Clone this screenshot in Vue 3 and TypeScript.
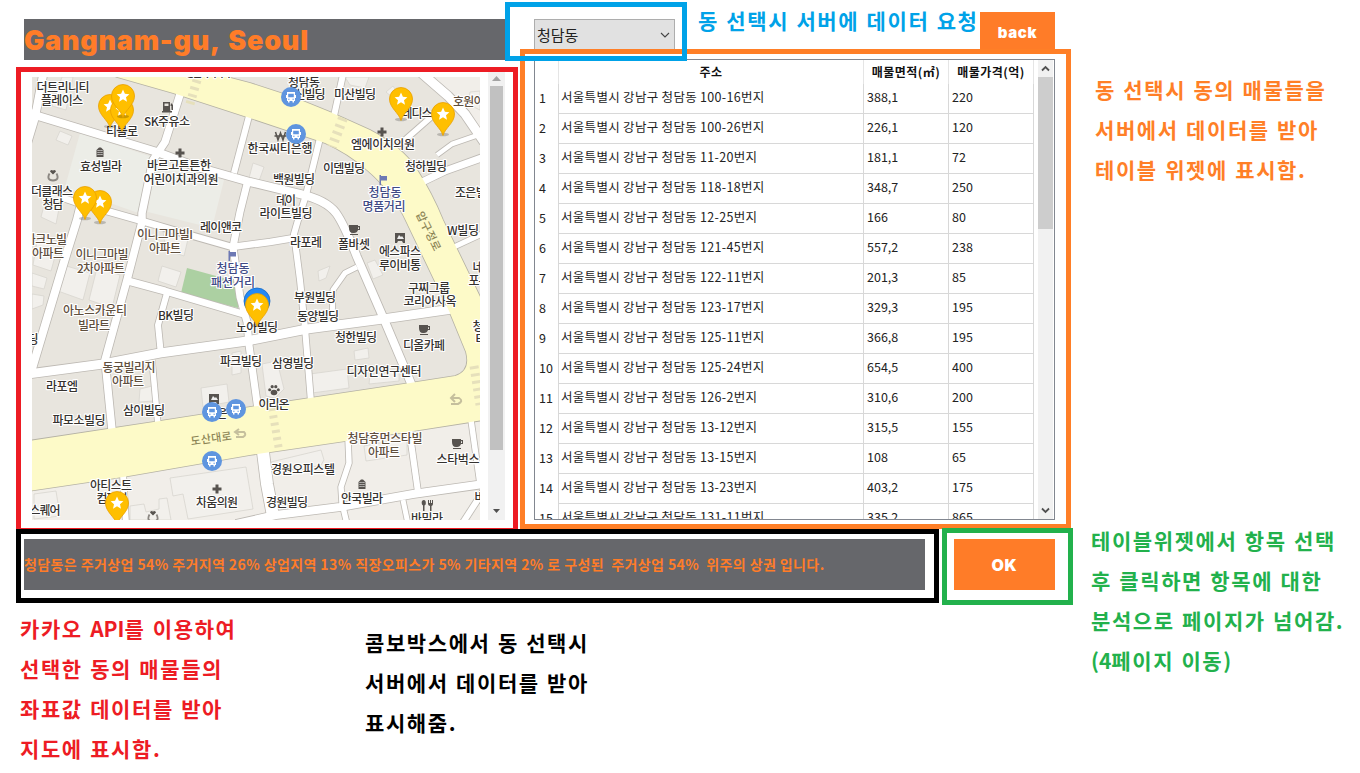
<script setup lang="ts">
interface Listing { address: string; area: string; price: string }
interface Label { t: string; x: number; y: number; w: number; k?: string; r?: number }

const dong = '청담동'
const prefix = '서울특별시 강남구 청담동 '
const raw: [string, string, string][] = [
  ['100-16', '388,1', '220'], ['100-26', '226,1', '120'], ['11-20', '181,1', '72'],
  ['118-18', '348,7', '250'], ['12-25', '166', '80'], ['121-45', '557,2', '238'],
  ['122-11', '201,3', '85'], ['123-17', '329,3', '195'], ['125-11', '366,8', '195'],
  ['125-24', '654,5', '400'], ['126-2', '310,6', '200'], ['13-12', '315,5', '155'],
  ['13-15', '108', '65'], ['13-23', '403,2', '175'], ['131-11', '335,2', '865'],
]
const listings: Listing[] = raw.map(([lot, area, price]) => ({ address: `${prefix}${lot}번지`, area, price }))

const minorRoads: { d: string; w: number }[] = [
  { d: 'M44 70L35 117L22 160', w: 8 },
  { d: 'M28 112L38 116L157 152L197 167L250 182L300 194Q326 200 336 213Q344 224 357 257L383 317L413 388', w: 8 },
  { d: 'M182 88L165 142L153 160L142 213L142 222L127 280L105 360L112 430', w: 7.5 },
  { d: 'M249 116L234 173', w: 6 },
  { d: 'M247 184L240 212L233 247L240 297L247 322L249 345L258 410', w: 7 },
  { d: 'M60 197L75 202L142 221L190 235L232 247L270 242L294 238', w: 6.5 },
  { d: 'M320 138L306 195L298 220L294 234L300 280L305 328L311 402', w: 6 },
  { d: 'M344 70L334 116', w: 6 },
  { d: 'M83 196L77 220L67 252L31 372', w: 8 },
  { d: 'M128 281L165 291L243 314', w: 7 },
  { d: 'M167 293L158 325L161 355', w: 6 },
  { d: 'M28 374L103 364L160 353L247 341L307 329L383 319L452 309', w: 9 },
  { d: 'M152 360L158 425', w: 5.5 },
  { d: 'M357 267L345 273L333 290L332 325', w: 5 },
  { d: 'M418 70L448 96L465 114L484 142', w: 9 },
  { d: 'M437 155L452 144L478 135', w: 4.5 },
  { d: 'M398 146L430 118L438 108', w: 5.5 },
  { d: 'M418 184L445 171L484 157', w: 7 },
  { d: 'M454 247L484 233', w: 5 },
  { d: 'M123 474L126 524', w: 6 },
  { d: 'M263 452L267 484L273 516', w: 12 },
  { d: 'M236 524L276 515L340 507L413 494L484 484', w: 8 },
  { d: 'M348 438L349 463L341 487L342 503L347 524', w: 5.5 },
  { d: 'M409 428L418 492', w: 6 },
  { d: 'M471 420L480 484', w: 5.5 },
  { d: 'M403 500L408 524', w: 5 },
  { d: 'M484 490L462 524', w: 6 },
]

const avenue =
  'M117 77L105 72L200 70L250 83L293 97L330 112L370 130Q402 147 416 168Q432 193 443 220L484 305V420L407 432L250 455L123 477L28 491V441L160 421L250 407L310 398L410 383L455 376Q471 371 466 352L450 313L407 223Q393 192 367 170Q348 153 325 143L250 118L173 93Z'

const buildings: string[] = [
  '60,131 72,136 68,145 56,140', '48,190 62,193 56,224 41,217',
  '253,163 264,167 259,181 249,178', '38,235 59,242 51,271 33,265', '32,273 47,278 44,289 32,286',
  '32,294 44,296 43,305 32,309', '63,265 90,273 83,300 58,291', '97,268 120,275 112,308 89,300',
  '162,266 181,272 176,287 158,281', '163,232 188,239 184,256 166,250',
  '140,389 152,386 153,401 139,402', '232,353 241,351 241,373 232,375',
  '201,388 227,384 229,402 203,407', '262,364 277,361 284,389 275,398 266,396',
  '310,374 347,369 349,388 312,393', '354,351 368,348 369,358 355,360',
  '318,271 330,266 326,278 319,281', '367,263 375,260 383,275 373,279',
  '345,77 369,77 365,88 350,85', '470,92 480,91 480,110 468,104',
  '170,478 246,467 253,509 188,519 183,494 173,496', '130,506 144,504 146,512 159,509 159,499 167,498 171,520 130,520',
  '271,462 321,450 324,460 321,465 300,470 272,468', '364,446 407,438 407,455 366,461',
  '34,494 56,491 60,516 34,519', '370,374 399,372 399,381 369,384',
  '62,77 73,77 66,110 52,106', '386,92 393,86 397,92 392,97',
]

const labels: Label[] = [
  { t: '청담사거리역', x: 208, y: 73, w: 46 },
  { t: '더트리니티', x: 63, y: 88, w: 53 }, { t: '플레이스', x: 62, y: 101, w: 42 },
  { t: 'SK주유소', x: 167, y: 122, w: 46 }, { t: '티블로', x: 122, y: 132, w: 32 },
  { t: '효성빌라', x: 101, y: 167, w: 42 }, { t: '바르고튼튼한', x: 179, y: 166, w: 64 },
  { t: '어린이치과의원', x: 181, y: 180, w: 75 }, { t: '더클래스', x: 52, y: 192, w: 42 },
  { t: '청담', x: 53, y: 205, w: 21 }, { t: '청담동', x: 304, y: 83, w: 32 },
  { t: '신빌딩', x: 310, y: 95, w: 31 }, { t: '미산빌딩', x: 355, y: 95, w: 42 },
  { t: '레디스', x: 417, y: 114, w: 31 }, { t: '호원아트', x: 474, y: 102, w: 42, k: 'apt' },
  { t: '엠에이치의원', x: 383, y: 145, w: 64 }, { t: '한국씨티은행', x: 280, y: 149, w: 65 },
  { t: '이뎀빌딩', x: 344, y: 169, w: 42 }, { t: '청하빌딩', x: 426, y: 167, w: 42 },
  { t: '백원빌딩', x: 294, y: 180, w: 42 }, { t: '데이', x: 286, y: 201, w: 20 },
  { t: '라이트빌딩', x: 286, y: 214, w: 53 }, { t: '청담동', x: 385, y: 193, w: 33, k: 'area' },
  { t: '명품거리', x: 384, y: 207, w: 43, k: 'area' }, { t: '조은빌딩', x: 476, y: 193, w: 42 },
  { t: '레이앤코', x: 221, y: 228, w: 42 }, { t: '이니그마빌I', x: 165, y: 235, w: 56, k: 'apt' },
  { t: '아파트', x: 165, y: 249, w: 32, k: 'apt' }, { t: '아크노빌', x: 46, y: 240, w: 42, k: 'apt' },
  { t: '아파트', x: 48, y: 254, w: 32, k: 'apt' }, { t: '이니그마빌', x: 102, y: 255, w: 53, k: 'apt' },
  { t: '2차아파트', x: 101, y: 269, w: 48, k: 'apt' }, { t: '라포레', x: 306, y: 243, w: 32 },
  { t: '폴바셋', x: 354, y: 245, w: 32 }, { t: '에스파스', x: 400, y: 252, w: 42 },
  { t: '루이비통', x: 400, y: 266, w: 42 }, { t: 'W빌딩', x: 463, y: 231, w: 32 },
  { t: '네일', x: 483, y: 268, w: 21 }, { t: '포유', x: 479, y: 281, w: 21 },
  { t: '청담동', x: 233, y: 269, w: 33, k: 'area' }, { t: '패션거리', x: 233, y: 283, w: 44, k: 'area' },
  { t: '구찌그룹', x: 429, y: 289, w: 42 }, { t: '코리아사옥', x: 430, y: 302, w: 53 },
  { t: '부원빌딩', x: 315, y: 298, w: 42 }, { t: '동양빌딩', x: 318, y: 317, w: 42 },
  { t: 'BK빌딩', x: 176, y: 316, w: 36 }, { t: '노아빌딩', x: 257, y: 328, w: 42 },
  { t: '청한빌딩', x: 356, y: 338, w: 42 }, { t: '디올카페', x: 424, y: 346, w: 42 },
  { t: '아노스카운티', x: 95, y: 311, w: 64, k: 'apt' }, { t: '빌라트', x: 94, y: 326, w: 32, k: 'apt' },
  { t: '딩', x: 33, y: 340, w: 10 }, { t: '청담', x: 483, y: 327, w: 21 }, { t: '타워', x: 486, y: 340, w: 21 },
  { t: '파크빌딩', x: 241, y: 362, w: 42 }, { t: '삼영빌딩', x: 293, y: 364, w: 42 },
  { t: '동궁빌리지', x: 129, y: 368, w: 53, k: 'apt' }, { t: '아파트', x: 128, y: 382, w: 32, k: 'apt' },
  { t: '라포엠', x: 62, y: 387, w: 32 }, { t: '디자인연구센터', x: 384, y: 372, w: 75 },
  { t: '이리온', x: 274, y: 405, w: 31 }, { t: '삼이빌딩', x: 144, y: 411, w: 42 },
  { t: '파모소빌딩', x: 79, y: 421, w: 53 }, { t: '은', x: 222, y: 414, w: 10 },
  { t: '청담휴먼스타빌', x: 385, y: 439, w: 75, k: 'apt' }, { t: '아파트', x: 384, y: 453, w: 32, k: 'apt' },
  { t: '스타벅스', x: 458, y: 460, w: 43 }, { t: '경원오피스텔', x: 303, y: 470, w: 64 },
  { t: '아티스트', x: 111, y: 486, w: 42 }, { t: '컴퍼니', x: 112, y: 499, w: 31 },
  { t: '차움의원', x: 217, y: 503, w: 42 }, { t: '안국빌라', x: 362, y: 499, w: 42 },
  { t: '경원빌딩', x: 287, y: 503, w: 42 }, { t: '스퀘어', x: 45, y: 511, w: 31 },
  { t: '바밀라', x: 427, y: 519, w: 32 }, { t: '바움', x: 485, y: 498, w: 21 },
  { t: '도산대로', x: 211, y: 438, w: 41, k: 'road', r: -8 },
  { t: '압구정로', x: 429, y: 231, w: 42, k: 'road', r: 64 },
]

const pins: [number, number][] = [
  [110, 106], [122, 110], [123, 96], [100, 202], [85, 198], [401, 99], [443, 114], [257, 305], [117, 503],
]
const buses: [number, number][] = [[291, 97], [296, 134], [212, 412], [236, 409], [212, 461]]
const crosses: [number, number][] = [[180, 153], [382, 132], [217, 489]]
const cups: [number, number][] = [[354, 230], [424, 330], [457, 444]]
const towers: [number, number][] = [[100, 152], [362, 484]]
const flags: [number, number][] = [[383, 180], [232, 256]]
const frames = ['red', 'orange', 'blue', 'black', 'green']
</script>

<template>
  <main class="page">
    <section class="board">
      <header class="top">
        <h1 class="title">Gangnam-gu, Seoul</h1>
        <div class="combo">
          <span>{{ dong }}</span>
          <svg width="10" height="6" viewBox="0 0 10 6"><path d="M1 1L5 5L9 1" fill="none" stroke="#444" stroke-width="1.1" /></svg>
        </div>
        <p class="note n-blue">동 선택시 서버에 데이터 요청</p>
        <button class="btn back">back</button>
      </header>

      <div class="body">
        <div class="mapview">
          <svg class="map" width="448" height="443" viewBox="32 77 448 443">
            <rect x="32" y="77" width="448" height="443" fill="#e8e5de" />
            <path d="M28 491L123 477L250 455L407 432L484 420V524H28Z" fill="#f1eee9" />
            <path d="M430 77H480V130Z" fill="#f1eee9" />
            <path d="M80 133L152 157L141 214L65 187ZM155 162L224 180L212 228L148 212Z" fill="#ecede7" />
            <path d="M187 268L238 282V308L181 293Z" fill="#acd0a2" />
            <polygon v-for="b in buildings" :key="b" :points="b" class="bld" />
            <g fill="none" stroke-linejoin="round">
              <path v-for="r in minorRoads" :key="r.d" :d="r.d" stroke="#bdb9b3" :stroke-width="r.w + 1.6" />
              <path :d="avenue" stroke="#b5b2a4" stroke-width="1.6" />
              <path v-for="r in minorRoads" :key="r.d" :d="r.d" stroke="#fff" :stroke-width="r.w" />
            </g>
            <path :d="avenue" fill="#fdfac8" />
            <g fill="none" stroke="#e6e0bb" stroke-dasharray="3 4.4">
              <path d="M197 80L190 104" stroke-width="9" />
              <path d="M343 118L332 147" stroke-width="10" />
              <path d="M272 408L279 450" stroke-width="8" />
              <path d="M474 366L480 405" stroke-width="9" />
            </g>
            <g fill="none" stroke="#c5bf9d" stroke-width="2">
              <path d="M236 437H243Q247 435 244 432H236M239 429L235 432L239 435" />
              <path d="M451 404H458Q464 401 459 398H452M455 394L451 398L455 402" />
            </g>

            <g fill="#57534f">
              <path v-for="c in crosses" :key="c.join()" :transform="`translate(${c[0]} ${c[1]})`" d="M-1.5-4.5h3v3h3v3h-3v3h-3v-3h-3v-3h3z" />
              <path v-for="c in cups" :key="c.join()" :transform="`translate(${c[0]} ${c[1]})`" fill-rule="evenodd" d="M-5-5H4V-4H6V0H4Q3 3 0 3H-1Q-5 3-5-2ZM4-2.8V-1H5V-2.8ZM-4 4H4V5H-4Z" />
              <g v-for="c in towers" :key="c.join()" :transform="`translate(${c[0]} ${c[1]})`">
                <path d="M-3.5 5V-2L-1-4.5H1L3.5-2V5Z" />
                <path d="M-2.5-1.5H2.5M-2.5.5H2.5M-2.5 2.5H2.5" stroke="#fff" stroke-width=".8" stroke-dasharray="1.2 .7" />
              </g>
              <path fill-rule="evenodd" d="M163 102H170V111H172V112.500H162V111H163ZM164.500 103.500V106H168.500V103.500ZM171 103L173 105V110H171.500V106H170.500Z" />
              <path d="M395 233h10v10h-2l-1-2h-4l-1 2h-2zM209 394h10v10h-2l-1-2h-4l-1 2h-2z" />
              <path d="M397 239l2-4 2 2 1-1 2 3zM211 400l2-4 2 2 1-1 2 3z" fill="#eee" />
              <g transform="translate(274 390)">
                <ellipse cx="0" cy="2.500" rx="3.300" ry="2.800" /><circle cx="-4.300" cy="-.3" r="1.500" /><circle cx="4.300" cy="-.3" r="1.500" />
                <circle cx="-1.800" cy="-3.300" r="1.600" /><circle cx="1.800" cy="-3.300" r="1.600" />
              </g>
              <g v-for="c in [[53, 175], [153, 516]]" :key="c.join()" :transform="`translate(${c[0]} ${c[1]})`">
                <path d="M0-.5L-3-3.500Q-2.500-6 0-4.600Q2.500-6 3-3.500Z" />
                <path d="M-3.500-1.500Q-7 5 0 5.500Q7 5 3.500-1.500" fill="none" stroke="#8b8782" stroke-width="1.800" />
              </g>
              <path d="M422 501q2-2 3.500 0q1 4-1 4.500v5.500h-1.500v-5.500q-2-1-1-4.500zM428 500h1v3h1v-3h1v3h1v-3h1v4q0 1.500-1.500 2v5h-1.500v-5q-2-.5-2-2z" />
              <path d="M275.500 132L278 140L280.500 133L283 140L285.500 132M274.500 136H286.500" fill="none" stroke="#57534f" stroke-width="1.500" />
            </g>
            <path v-for="f in flags" :key="f.join()" :transform="`translate(${f[0]} ${f[1]})`" d="M-3.500-5h1.500v1h6v4.500h-6V5h-1.500z" fill="#6d79b4" />

            <text
              v-for="(l, i) in labels" :key="i" :x="l.x" :y="l.y" :textLength="l.w" class="lb" :class="l.k" dy="4.4"
              :transform="l.r ? `rotate(${l.r} ${l.x} ${l.y})` : undefined"
            >{{ l.t }}</text>

            <g v-for="b in buses" :key="b.join()" :transform="`translate(${b[0]} ${b[1]})`">
              <circle r="10" fill="#5f95df" />
              <path fill="#fff" fill-rule="evenodd" d="M-4-5H4V-2H5V1H4V4H3V5.500H1.500V4H-1.500V5.500H-3V4H-4V1H-5V-2H-4ZM-2.800-3.200V.3H2.800V-3.200ZM-2.800 1.700V2.800H-1.500V1.700ZM1.500 1.700V2.800H2.800V1.700Z" />
            </g>

            <circle cx="257" cy="301" r="13" fill="#2389f5" stroke="#1768c4" stroke-width=".8" />
            <g v-for="p in pins" :key="p.join()" :transform="`translate(${p[0]} ${p[1]})`">
              <ellipse cy="20.500" rx="6" ry="1.800" fill="#000" opacity=".2" />
              <path d="M0 21.500C-2 14-11.500 9-11.500 0A11.500 11.500 0 0 1 11.500 0C11.500 9 2 14 0 21.500Z" fill="#ffbf00" stroke="#e8a000" stroke-width=".8" />
              <path d="M0-6.500L1.900-2.200L6.400-1.800L3 1.200L4 5.700L0 3.300L-4 5.700L-3 1.200L-6.400-1.800L-1.900-2.200Z" fill="#fff" />
            </g>
          </svg>
          <div class="vbar">
            <svg width="17" height="14"><path d="M4 9L8.500 4L13 9Z" fill="#a3a3a3" /></svg>
            <i class="thumb" />
            <svg class="down" width="17" height="17"><path d="M5 6H12L8.500 10Z" fill="#505050" /></svg>
          </div>
        </div>

        <div class="tablebox">
          <div class="grid">
            <div class="tr th"><span /><span>주소</span><span>매물면적(㎡)</span><span>매물가격(억)</span></div>
            <div v-for="(r, i) in listings" :key="i" class="tr">
              <span class="num">{{ i + 1 }}</span><span>{{ r.address }}</span><span>{{ r.area }}</span><span>{{ r.price }}</span>
            </div>
          </div>
          <div class="sbar">
            <svg width="15" height="17"><path d="M4 10.500L7.500 7L11 10.500" fill="none" stroke="#505050" stroke-width="1.800" /></svg>
            <i class="thumb" />
            <svg class="down" width="15" height="17"><path d="M4 6.500L7.500 10L11 6.500" fill="none" stroke="#505050" stroke-width="1.800" /></svg>
          </div>
        </div>
      </div>

      <footer class="foot">
        <p class="summary">청담동은 주거상업 54% 주거지역 26% 상업지역 13% 직장오피스가 5% 기타지역 2% 로 구성된&nbsp; 주거상업 54%&nbsp; 위주의 상권 입니다.</p>
        <button class="btn ok">OK</button>
      </footer>

      <div class="under">
        <p class="note n-red">카카오 <span class="tight">API</span>를 이용하여<br>선택한 동의 매물들의<br>좌표값 데이터를 받아<br>지도에 표시함.</p>
        <p class="note n-black">콤보박스에서 동 선택시<br>서버에서 데이터를 받아<br>표시해줌.</p>
      </div>
    </section>

    <aside class="side">
      <p class="note n-orange">동 선택시 동의 매물들을<br>서버에서 데이터를 받아<br>테이블 위젯에 표시함.</p>
      <p class="note n-green">테이블위젯에서 항목 선택<br>후 클릭하면 항목에 대한<br>분석으로 페이지가 넘어감.<br><span class="tight">(4</span>페이지 이동)</p>
    </aside>

    <div v-for="f in frames" :key="f" class="frame" :class="`f-${f}`" />
  </main>
</template>

<style>
html, body { background: #fff; overflow: hidden; }
</style>

<style scoped>
* { box-sizing: border-box; }
p, h1 { margin: 0; }
.page {
  position: relative; display: grid; grid-template-columns: 1071px 1fr; width: 1360px; height: 773px;
  overflow: hidden; background: #fff; font-family: "Noto Sans CJK KR", "Noto Sans", sans-serif;
}
.board { padding-top: 12px; }
.top { display: flex; align-items: flex-start; height: 47px; margin-left: 24px; }
.title {
  flex: none; width: 481px; height: 41px; margin-top: 7px; background: #66676b; color: #ff7c28;
  font: 900 27px/44px Inter, "DejaVu Sans", sans-serif; letter-spacing: .75px; word-spacing: 3px; white-space: nowrap;
}
.combo {
  flex: none; display: flex; align-items: center; justify-content: space-between; width: 141px; height: 31px;
  margin: 7px 0 0 29px; padding: 0 4px 0 2px; border: 1px solid #adadad; background: #e1e1e1;
  font-size: 15px; line-height: 28px; color: #222;
}
.note { font-size: 21px; font-weight: 700; line-height: 40px; letter-spacing: 1.6px; word-spacing: 1px; white-space: nowrap; }
.tight { letter-spacing: 0; }
.n-blue { flex: none; width: 282px; margin: -12px 0 0 23px; color: #00a2e8; }
.n-red { color: #ed1c24; width: 345px; margin-top: -2px; }
.n-black { color: #000; margin-top: 12px; }
.n-orange { color: #ff7f27; }
.n-green { color: #22b14c; }
.btn { flex: none; border: 0; padding: 0; background: #ff7c28; color: #fff; font: 900 15px/1 Inter, "DejaVu Sans", sans-serif; letter-spacing: .6px; }
.back { width: 75px; height: 41px; }
.body { display: flex; height: 461px; margin-left: 24px; }
.mapview { display: flex; justify-content: space-between; width: 481px; height: 448px; margin-top: 13px; padding-left: 8px; }
.map { display: block; margin-top: 5px; }
.bld { fill: #f2f0ec; stroke: #d8d5cf; stroke-width: .8; }
.lb {
  font-size: 12px; font-weight: 500; text-anchor: middle; fill: #35322f; stroke: #fff; stroke-width: 2.2px;
  stroke-linejoin: round; paint-order: stroke;
}
.apt { fill: #5f4f3e; }
.area { fill: #404a85; }
.road { fill: #8c8556; stroke: #fdfac8; font-size: 11px; }
.vbar, .sbar { display: flex; flex-direction: column; background: #f1f1f1; }
.vbar { width: 17px; align-items: center; }
.vbar .thumb { width: 13px; height: 364px; background: #c1c1c1; }
.down { margin-top: auto; }
.tablebox { display: flex; justify-content: space-between; width: 521px; height: 461px; margin-left: 29px; border: 1px solid #828790; overflow: hidden; }
.grid { width: 499px; }
.tr { display: grid; grid-template-columns: 24px 305px 85px 85px; height: 30px; font-size: 12.5px; line-height: 26px; color: #222; }
.tr span { border-right: 1px solid #d8d8d8; border-bottom: 1px solid #d8d8d8; padding-left: 2px; white-space: nowrap; }
.tr span + span { padding-left: 3px; }
.tr span:nth-child(2) { padding-left: 2px; letter-spacing: .3px; }
.tr .num { border-bottom: 0; padding-left: 4px; line-height: 28px; }
.tr.th { height: 24px; font-weight: 700; line-height: 24px; font-size: 12px; color: #111; }
.tr.th span { border-bottom: 0; border-right-color: #e5e5e5; padding-left: 0; text-align: center; letter-spacing: .45px; }
.sbar { width: 15px; margin-right: 1px; }
.sbar .thumb { height: 152px; background: #cdcdcd; }
.foot { display: flex; justify-content: space-between; width: 1031px; height: 51px; margin: 19px 0 0 24px; }
.summary { width: 901px; background: #66676b; color: #ff7c28; font-size: 14px; font-weight: 700; line-height: 51px; letter-spacing: .4px; white-space: nowrap; }
.ok { width: 101px; font-size: 16px; }
.under { display: flex; align-items: flex-start; margin: 20px 0 0 20px; }
.side { display: flex; flex-direction: column; padding: 69px 0 0 20px; }
.side .n-orange { margin-left: 4px; }
.side .n-green { margin-top: 331px; }
.frame { position: absolute; border: 5px solid; }
.f-red { left: 16px; top: 67px; width: 502px; height: 467px; border-color: #ed1c24; border-bottom-width: 6px; }
.f-orange { left: 520px; top: 49px; width: 551px; height: 480px; border-color: #ff7f27; }
.f-blue { left: 505px; top: 2px; width: 182px; height: 59px; border-color: #00a2e8; }
.f-black { left: 16px; top: 529px; width: 923px; height: 74px; border-color: #000; }
.f-green { left: 942px; top: 528px; width: 131px; height: 77px; border-color: #22b14c; }
</style>
